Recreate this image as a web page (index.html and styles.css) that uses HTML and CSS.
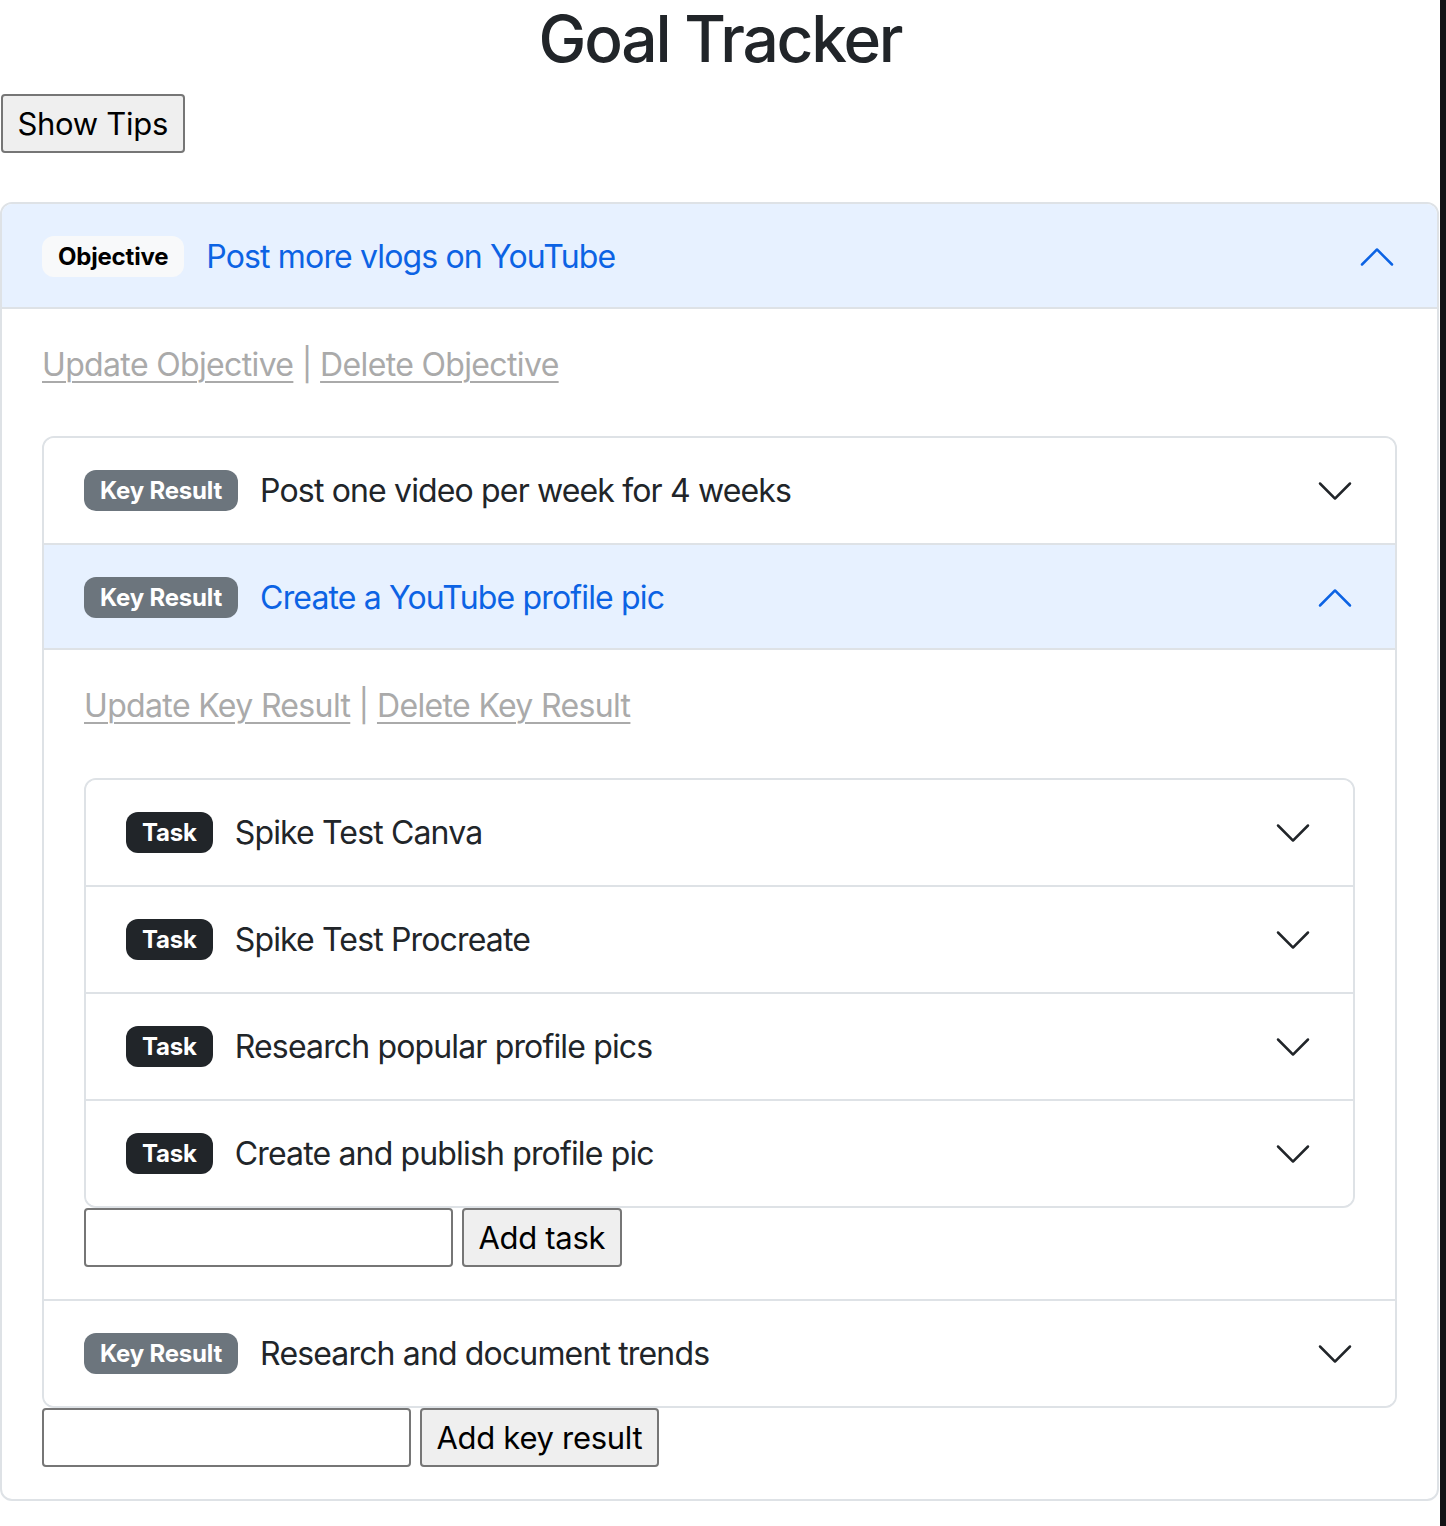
FILE: index.html
```html
<!DOCTYPE html>
<html lang="en">
<head>
<meta charset="utf-8">
<title>Goal Tracker</title>
<link rel="stylesheet" href="styles.css">
</head>
<body>
<div class="page">
  <h1 class="title">Goal Tracker</h1>
  <button class="native-btn tips-btn" type="button">Show Tips</button>

  <div class="accordion objective-acc">
    <div class="acc-item">
      <div class="acc-header active">
        <span class="badge badge-light">Objective</span>
        <span class="acc-title">Post more vlogs on YouTube</span>
        <svg class="chev" viewBox="0 0 16 16"><path fill="currentColor" fill-rule="evenodd" d="M1.646 4.646a.5.5 0 0 1 .708 0L8 10.293l5.646-5.647a.5.5 0 0 1 .708.708l-6 6a.5.5 0 0 1-.708 0l-6-6a.5.5 0 0 1 0-.708z"/></svg>
      </div>
      <div class="acc-body">
        <p class="links"><a href="#">Update Objective</a> | <a href="#">Delete Objective</a></p>

        <div class="accordion">
          <div class="acc-item">
            <div class="acc-header">
              <span class="badge badge-secondary">Key Result</span>
              <span class="acc-title">Post one video per week for 4 weeks</span>
              <svg class="chev" viewBox="0 0 16 16"><path fill="currentColor" fill-rule="evenodd" d="M1.646 4.646a.5.5 0 0 1 .708 0L8 10.293l5.646-5.647a.5.5 0 0 1 .708.708l-6 6a.5.5 0 0 1-.708 0l-6-6a.5.5 0 0 1 0-.708z"/></svg>
            </div>
          </div>
          <div class="acc-item">
            <div class="acc-header active">
              <span class="badge badge-secondary">Key Result</span>
              <span class="acc-title">Create a YouTube profile pic</span>
              <svg class="chev" viewBox="0 0 16 16"><path fill="currentColor" fill-rule="evenodd" d="M1.646 4.646a.5.5 0 0 1 .708 0L8 10.293l5.646-5.647a.5.5 0 0 1 .708.708l-6 6a.5.5 0 0 1-.708 0l-6-6a.5.5 0 0 1 0-.708z"/></svg>
            </div>
            <div class="acc-body">
              <p class="links links-kr"><a href="#">Update Key Result</a> | <a href="#">Delete Key Result</a></p>

              <div class="accordion">
                <div class="acc-item">
                  <div class="acc-header">
                    <span class="badge badge-dark">Task</span>
                    <span class="acc-title">Spike Test Canva</span>
                    <svg class="chev" viewBox="0 0 16 16"><path fill="currentColor" fill-rule="evenodd" d="M1.646 4.646a.5.5 0 0 1 .708 0L8 10.293l5.646-5.647a.5.5 0 0 1 .708.708l-6 6a.5.5 0 0 1-.708 0l-6-6a.5.5 0 0 1 0-.708z"/></svg>
                  </div>
                </div>
                <div class="acc-item">
                  <div class="acc-header">
                    <span class="badge badge-dark">Task</span>
                    <span class="acc-title">Spike Test Procreate</span>
                    <svg class="chev" viewBox="0 0 16 16"><path fill="currentColor" fill-rule="evenodd" d="M1.646 4.646a.5.5 0 0 1 .708 0L8 10.293l5.646-5.647a.5.5 0 0 1 .708.708l-6 6a.5.5 0 0 1-.708 0l-6-6a.5.5 0 0 1 0-.708z"/></svg>
                  </div>
                </div>
                <div class="acc-item">
                  <div class="acc-header">
                    <span class="badge badge-dark">Task</span>
                    <span class="acc-title">Research popular profile pics</span>
                    <svg class="chev" viewBox="0 0 16 16"><path fill="currentColor" fill-rule="evenodd" d="M1.646 4.646a.5.5 0 0 1 .708 0L8 10.293l5.646-5.647a.5.5 0 0 1 .708.708l-6 6a.5.5 0 0 1-.708 0l-6-6a.5.5 0 0 1 0-.708z"/></svg>
                  </div>
                </div>
                <div class="acc-item">
                  <div class="acc-header">
                    <span class="badge badge-dark">Task</span>
                    <span class="acc-title">Create and publish profile pic</span>
                    <svg class="chev" viewBox="0 0 16 16"><path fill="currentColor" fill-rule="evenodd" d="M1.646 4.646a.5.5 0 0 1 .708 0L8 10.293l5.646-5.647a.5.5 0 0 1 .708.708l-6 6a.5.5 0 0 1-.708 0l-6-6a.5.5 0 0 1 0-.708z"/></svg>
                  </div>
                </div>
              </div>
              <div class="add-row">
                <input class="native-input" type="text">
                <button class="native-btn" type="button">Add task</button>
              </div>
            </div>
          </div>
          <div class="acc-item">
            <div class="acc-header">
              <span class="badge badge-secondary">Key Result</span>
              <span class="acc-title">Research and document trends</span>
              <svg class="chev" viewBox="0 0 16 16"><path fill="currentColor" fill-rule="evenodd" d="M1.646 4.646a.5.5 0 0 1 .708 0L8 10.293l5.646-5.647a.5.5 0 0 1 .708.708l-6 6a.5.5 0 0 1-.708 0l-6-6a.5.5 0 0 1 0-.708z"/></svg>
            </div>
          </div>
        </div>
        <div class="add-row">
          <input class="native-input" type="text">
          <button class="native-btn" type="button">Add key result</button>
        </div>
      </div>
    </div>
  </div>
</div>
</body>
</html>
```

FILE: styles.css
```css
html {
  background: #121416;
}
body {
  margin: 0;
  font-family: Inter, "Noto Sans", "Liberation Sans", sans-serif;
  font-size: 32px;
  line-height: 1.5;
  color: #212529;
}
.page {
  width: 1440px;
  min-height: 1526px;
  background: #fff;
}
.title {
  margin: 0 0 16px;
  font-family: Inter, "Liberation Sans", sans-serif;
  font-weight: 500;
  font-size: 64px;
  line-height: 78px;
  text-align: center;
  color: #212529;
  letter-spacing: -2.2px;
}
.native-btn {
  font-family: Inter, "Liberation Sans", sans-serif;
  font-size: 31px;
  line-height: 40px;
  letter-spacing: -0.3px;
  color: #000;
  background: #efefef;
  border: 2px solid #767676;
  border-radius: 4px;
  padding: 7px 14.5px;
  height: 59px;
  margin: 0;
}
.tips-btn {
  display: block;
  margin-left: 1px;
  margin-bottom: 49px;
}
.accordion {
  border: 2px solid #dee2e6;
  border-radius: 12px;
  overflow: hidden;
  background: #fff;
}
.objective-acc {
  width: 1439px;
  box-sizing: border-box;
}
.acc-item + .acc-item {
  border-top: 2px solid #dee2e6;
}
.acc-header {
  display: flex;
  align-items: center;
  padding: 32px 40px;
  height: 41px;
  box-sizing: content-box;
  color: #212529;
  background: #fff;
}
.acc-header.active {
  color: #0c63e4;
  background: #e7f1ff;
  box-shadow: inset 0 -2px 0 #dee2e6;
}
.acc-title {
  flex: 1;
  line-height: 41px;
  white-space: nowrap;
  letter-spacing: -0.85px;
}
.badge {
  display: inline-block;
  font-size: 24px;
  font-weight: 700;
  line-height: 1;
  padding: 8.5px 16px;
  border-radius: 12px;
  margin-right: 22px;
  white-space: nowrap;
  letter-spacing: -0.2px;
}
.badge-light {
  background: #f8f9fa;
  color: #000;
}
.badge-secondary {
  background: #6c757d;
  color: #fff;
}
.badge-dark {
  background: #212529;
  color: #fff;
}
.chev {
  width: 40px;
  height: 40px;
  flex: none;
  color: #212529;
}
.acc-header.active .chev {
  transform: rotate(-180deg);
  color: #0c63e4;
}
.acc-body {
  padding: 32px 40px;
}
.links {
  margin: 0 0 47px;
  color: #aaaaaa;
  line-height: 48px;
  letter-spacing: -0.65px;
}
.links-kr {
  margin-bottom: 48px;
}
.links a {
  color: #aaaaaa;
  text-decoration: underline;
  text-decoration-thickness: 2px;
  text-underline-offset: 5px;
}
.add-row {
  display: flex;
  align-items: center;
  gap: 9px;
}
.native-input {
  width: 369px;
  height: 59px;
  box-sizing: border-box;
  border: 2px solid #767676;
  border-radius: 4px;
  padding: 0 8px;
  font-size: 26px;
  margin: 0;
  background: #fff;
}
```
